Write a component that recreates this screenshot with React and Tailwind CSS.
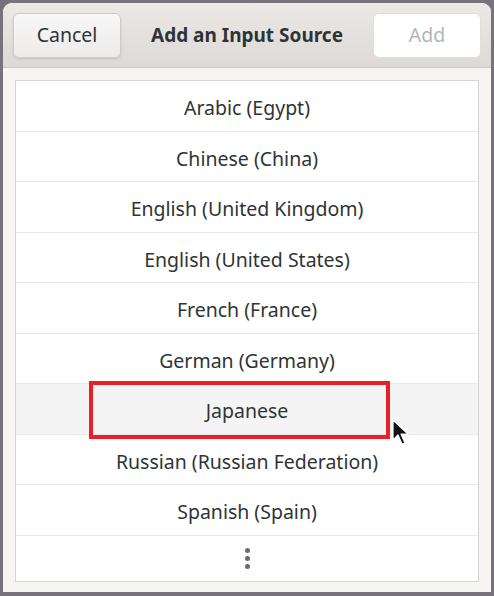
import React from "react";

const sources = [
  "Arabic (Egypt)",
  "Chinese (China)",
  "English (United Kingdom)",
  "English (United States)",
  "French (France)",
  "German (Germany)",
  "Japanese",
  "Russian (Russian Federation)",
  "Spanish (Spain)",
];

function Cursor() {
  return (
    <svg width="20" height="28" viewBox="0 0 20 28" className="absolute left-[392px] top-[419px]">
      <path d="M1 1 L1 21 L6 16 L10 25 L13 24 L9 15 L16 15 Z" fill="#111" stroke="#fff" strokeWidth="1.2" strokeLinejoin="round" />
    </svg>
  );
}

export default function App() {
  return (
    <div className="relative w-[494px] h-[596px] bg-[#78737a] pt-[3px] px-[3px] pb-[4px]" style={{ fontFamily: '"Noto Sans", "Open Sans", sans-serif' }}>
      <div className="h-full flex flex-col rounded-t-[9px] overflow-hidden bg-[#f6f5f4]">
        <div className="h-[65px] flex items-center justify-between px-[10px] bg-gradient-to-b from-[#ece8e6] to-[#dcd9d6] border-b border-[#cdc7c2]">
          <button className="w-[108px] h-[45px] rounded-[6px] bg-gradient-to-b from-[#f8f7f7] to-[#edebea] border border-[#d0cbc8] shadow-sm text-[19.5px] text-[#2e3436]">
            Cancel
          </button>
          <div className="text-[19px] font-bold text-[#2e3436]">Add an Input Source</div>
          <button className="w-[108px] h-[45px] rounded-[6px] bg-white border border-[#e2dedc] text-[19.5px] text-[#b4b6b6]">
            Add
          </button>
        </div>
        <div className="flex-1 px-[12px] pt-[12px]">
          <div className="bg-white border border-[#d8d3d1]">
            {sources.map((s) => (
              <div
                key={s}
                className={`h-[50.5px] pt-[4px] flex items-center justify-center border-b border-[#ebe8e7] text-[19.5px] text-[#2e3436] ${s === "Japanese" ? "bg-[#f4f4f4]" : ""}`}
              >
                {s}
              </div>
            ))}
            <div className="h-[45px] flex flex-col items-center justify-center gap-[3px]">
              <span className="w-[5px] h-[5px] rounded-full bg-[#6b6b6b]" />
              <span className="w-[5px] h-[5px] rounded-full bg-[#6b6b6b]" />
              <span className="w-[5px] h-[5px] rounded-full bg-[#6b6b6b]" />
            </div>
          </div>
        </div>
      </div>
      <div className="absolute left-[89px] top-[381px] w-[301px] h-[58px] border-[4px] border-[#e8202a]" />
      <Cursor />
    </div>
  );
}
